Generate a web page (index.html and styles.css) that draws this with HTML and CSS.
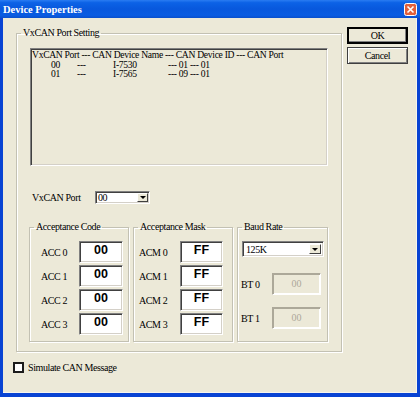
FILE: index.html
```html
<!DOCTYPE html>
<html>
<head>
    <meta charset="UTF-8">
    <title>Device Properties</title>
    <link rel="stylesheet" href="styles.css">
</head>
<body>
<div class="window">
    <div class="titlebar">
        <span class="title">Device Properties</span>
        <span class="close">
            <svg width="13" height="13" viewBox="0 0 13 13">
                <rect x="0.5" y="0.5" width="12" height="12" rx="2" fill="#e2603c" stroke="#fff"/>
                <path d="M3.5 3.5 L9.5 9.5 M9.5 3.5 L3.5 9.5" stroke="#fff" stroke-width="1.6"/>
            </svg>
        </span>
    </div>
    <div class="frame">
        <div class="top">
            <fieldset class="group port_setting">
                <legend>VxCAN Port Setting</legend>
                <div class="listbox">
                    <div>VxCAN Port --- CAN Device Name --- CAN Device ID --- CAN Port</div>
                    <div class="row"><span class="c1">00</span><span class="c2">---</span><span class="c3">I-7530</span><span>--- 01 --- 01</span></div>
                    <div class="row"><span class="c1">01</span><span class="c2">---</span><span class="c3">I-7565</span><span>--- 09 --- 01</span></div>
                </div>
                <div class="port_row">
                    <span class="port_label">VxCAN Port</span>
                    <div class="combo port_combo">
                        <span class="combo_text">00</span>
                        <span class="drop"></span>
                    </div>
                </div>
                <div class="groups">
                    <fieldset class="group code">
                        <legend>Acceptance Code</legend>
                        <div class="field_grid">
                            <span>ACC 0</span><span class="edit">00</span>
                            <span>ACC 1</span><span class="edit">00</span>
                            <span>ACC 2</span><span class="edit">00</span>
                            <span>ACC 3</span><span class="edit">00</span>
                        </div>
                    </fieldset>
                    <fieldset class="group mask">
                        <legend>Acceptance Mask</legend>
                        <div class="field_grid">
                            <span>ACM 0</span><span class="edit">FF</span>
                            <span>ACM 1</span><span class="edit">FF</span>
                            <span>ACM 2</span><span class="edit">FF</span>
                            <span>ACM 3</span><span class="edit">FF</span>
                        </div>
                    </fieldset>
                    <fieldset class="group baud">
                        <legend>Baud Rate</legend>
                        <div class="combo baud_combo">
                            <span class="combo_text">125K</span>
                            <span class="drop"></span>
                        </div>
                        <div class="bt_row bt0">
                            <span>BT 0</span><span class="edit disabled">00</span>
                        </div>
                        <div class="bt_row bt1">
                            <span>BT 1</span><span class="edit disabled">00</span>
                        </div>
                    </fieldset>
                </div>
            </fieldset>
            <div class="buttons">
                <div class="button default">OK</div>
                <div class="button">Cancel</div>
            </div>
        </div>
        <div class="check_row">
            <span class="checkbox"></span>
            <span>Simulate CAN Message</span>
        </div>
    </div>
</div>
</body>
</html>
```

FILE: styles.css
```css
body {
    margin: 0;
    font-family: "Liberation Serif", "Noto Sans CJK TC", serif;
    font-size: 10px;
    letter-spacing: -0.4px;
    color: #000;
}
.window {
    width: 420px;
    height: 397px;
    background: #0843d3;
    display: flex;
    flex-direction: column;
}
.titlebar {
    height: 18px;
    display: flex;
    align-items: center;
    justify-content: space-between;
    background: linear-gradient(to bottom, #2a7cf2 0%, #0c62e6 15%, #0858dd 50%, #0a5ce2 85%, #0a50cc 100%);
}
.title {
    padding-left: 3px;
    color: #fff;
    font-weight: bold;
    font-size: 10.5px;
    letter-spacing: 0;
}
.close {
    width: 13px;
    height: 13px;
    margin-right: 3px;
    display: flex;
}
.frame {
    margin: 0 3px 4px 3px;
    height: 375px;
    background: #ece9d8;
    box-shadow: inset -1px -1px 0 #f6f5ee;
}
.top {
    display: flex;
    align-items: flex-start;
    padding: 9px 0 0 13px;
}
.group {
    margin: 0;
    padding: 0;
    border: 1px solid #c3c1b3;
    box-shadow: 1px 1px 0 #fff, inset 1px 1px 0 #fff;
    box-sizing: border-box;
    min-width: 0;
}
.group legend {
    margin-left: 4px;
    padding: 0 2px;
    line-height: 12px;
}
.port_setting {
    width: 326px;
    padding: 0 13px 9px 13px;
}
.port_setting > legend {
    margin-left: -9px;
}
.listbox {
    margin-top: 9px;
    height: 118px;
    box-sizing: border-box;
    border-top: 1px solid #808080;
    border-left: 1px solid #808080;
    border-bottom: 1px solid #fff;
    border-right: 1px solid #fff;
    box-shadow: inset 1px 1px 0 #404040, inset -1px -1px 0 #d4d0c8;
    padding: 1px 0 0 1px;
    font-size: 9.6px;
    letter-spacing: -0.3px;
    line-height: 9.5px;
    white-space: nowrap;
    overflow: hidden;
}
.row span {
    display: inline-block;
}
.c1 {
    margin-left: 19px;
    width: 26px;
}
.c2 {
    width: 36px;
}
.c3 {
    width: 55px;
}
.port_row {
    display: flex;
    align-items: center;
    margin-top: 25px;
    padding-left: 2px;
}
.port_label {
    width: 63px;
}
.combo {
    display: flex;
    align-items: center;
    justify-content: space-between;
    box-sizing: border-box;
    background: #fff;
    border-top: 1px solid #808080;
    border-left: 1px solid #808080;
    border-bottom: 1px solid #fff;
    border-right: 1px solid #fff;
    box-shadow: inset 1px 1px 0 #404040, inset -1px -1px 0 #d4d0c8;
    padding: 2px;
}
.combo_text {
    padding-left: 1px;
    line-height: 9px;
}
.port_combo {
    width: 55px;
    height: 13px;
    padding: 1px;
}
.baud_combo {
    width: 82px;
    height: 16px;
    margin: 8px 0 0 4px;
}
.drop {
    width: 11px;
    height: 100%;
    box-sizing: border-box;
    background: #ece9d8;
    border-top: 1px solid #fff;
    border-left: 1px solid #fff;
    border-bottom: 1px solid #404040;
    border-right: 1px solid #404040;
    display: flex;
    align-items: center;
    justify-content: center;
}
.drop::after {
    content: '';
    border-left: 3px solid transparent;
    border-right: 3px solid transparent;
    border-top: 3px solid #000;
}
.baud_combo .drop {
    width: 12px;
}
.groups {
    display: flex;
    gap: 4px;
    margin: 17px 0 0 -1px;
}
.code {
    width: 100px;
    padding: 8px 0 6px 0;
}
.mask {
    width: 100px;
    padding: 8px 0 6px 0;
}
.baud {
    width: 91px;
    padding: 0 0 6px 0;
}
.field_grid {
    display: grid;
    grid-template-columns: 38px 44px;
    row-gap: 2px;
    align-items: center;
}
.code .field_grid {
    margin-left: 11px;
}
.mask .field_grid {
    margin-left: 5px;
    grid-template-columns: 41px 43px;
}
.edit {
    height: 22px;
    box-sizing: border-box;
    background: #fff;
    border-top: 1px solid #808080;
    border-left: 1px solid #808080;
    border-bottom: 1px solid #fff;
    border-right: 1px solid #fff;
    box-shadow: inset 1px 1px 0 #404040, inset -1px -1px 0 #d4d0c8;
    text-align: center;
    font-family: "Liberation Sans", Arial, sans-serif;
    font-weight: bold;
    font-size: 12.5px;
    letter-spacing: 0;
    line-height: 17px;
}
.edit.disabled {
    width: 49px;
    background: #ece9d8;
    color: #aca899;
    font-family: "Liberation Serif", serif;
    font-weight: normal;
    font-size: 10px;
    line-height: 20px;
    box-shadow: inset 1px 1px 0 #aca899, inset -1px -1px 0 #fff;
    border-color: #aca899 #fff #fff #aca899;
}
.bt_row {
    display: flex;
    align-items: center;
    justify-content: space-between;
    padding: 0 6px 0 3px;
}
.bt0 {
    margin-top: 16px;
}
.bt1 {
    margin-top: 12px;
}
.buttons {
    display: flex;
    flex-direction: column;
    gap: 3px;
    margin-left: 5px;
}
.button {
    width: 61px;
    height: 17px;
    box-sizing: border-box;
    border: 1px solid #404040;
    box-shadow: inset 1px 1px 0 #fff, inset -1px -1px 0 #808080;
    text-align: center;
    line-height: 15px;
}
.button.default {
    border: 1px solid #000;
    box-shadow: inset 0 0 0 1px #000, inset -2px -2px 0 #808080;
}
.check_row {
    display: flex;
    align-items: center;
    gap: 4px;
    margin-top: 10px;
    padding-left: 10px;
}
.checkbox {
    width: 11px;
    height: 11px;
    box-sizing: border-box;
    background: #fff;
    border: 2px solid #1c1c1c;
}
```
